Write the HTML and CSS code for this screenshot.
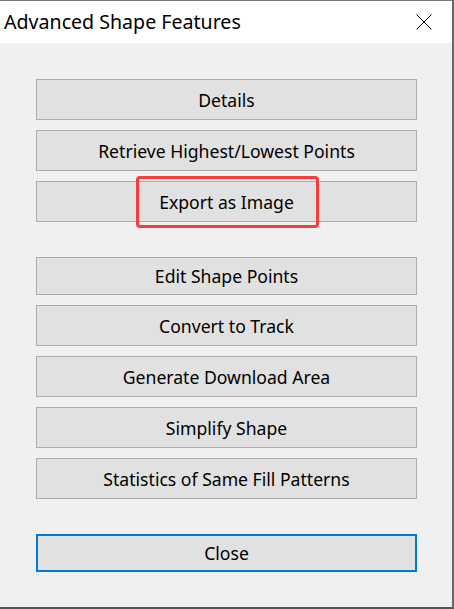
FILE: index.html
```html
<!DOCTYPE html>
<html>
<head>
<meta charset="utf-8">
<link rel="stylesheet" href="styles.css">
</head>
<body>
<div class="window">
  <div class="titlebar">
    <span class="title">Advanced Shape Features</span>
    <span class="close-x">
      <svg width="16" height="16" viewBox="0 0 16 16"><path d="M0.5 0.5 L15.5 15.5 M15.5 0.5 L0.5 15.5" stroke="#000" stroke-width="1" fill="none"/></svg>
    </span>
  </div>
  <div class="content">
    <div class="group">
      <button class="btn">Details</button>
      <button class="btn">Retrieve Highest/Lowest Points</button>
      <div class="btn-wrap">
        <button class="btn">Export as Image</button>
        <span class="highlight"></span>
      </div>
    </div>
    <div class="group group-2">
      <button class="btn btn-short">Edit Shape Points</button>
      <button class="btn">Convert to Track</button>
      <button class="btn">Generate Download Area</button>
      <button class="btn">Simplify Shape</button>
      <button class="btn">Statistics of Same Fill Patterns</button>
    </div>
    <div class="group group-3">
      <button class="btn btn-short btn-default">Close</button>
    </div>
  </div>
</div>
</body>
</html>
```

FILE: styles.css
```css
html, body {
  margin: 0;
  padding: 0;
  background: #f0f0f0;
}
.window {
  width: 452px;
  height: 606px;
  border-top: 1px solid #777;
  border-right: 2px solid #666;
  border-bottom: 2px solid #555;
  background: #f0f0f0;
  font-family: "Noto Sans", sans-serif;
  display: flex;
  flex-direction: column;
}
.titlebar {
  height: 42px;
  background: #fff;
  display: flex;
  align-items: center;
  justify-content: space-between;
  padding: 0 20px 0 4px;
}
.title {
  font-size: 19.6px;
  color: #000;
  margin-top: -1px;
}
.close-x {
  display: flex;
  margin-top: -1px;
}
.content {
  padding: 36px 0 0 36px;
  display: flex;
  flex-direction: column;
}
.group {
  display: flex;
  flex-direction: column;
  gap: 10px;
}
.group-2, .group-3 {
  margin-top: 35px;
}
.btn {
  width: 381px;
  height: 41px;
  margin: 0;
  padding: 0;
  background: #e1e1e1;
  border: 1px solid #adadad;
  font-family: "Noto Sans", sans-serif;
  font-size: 17.6px;
  color: #000;
  box-sizing: border-box;
}
.btn-short {
  height: 38px;
}
.btn-default {
  border: 2px solid #0078d7;
}
.btn-wrap {
  position: relative;
  display: flex;
}
.highlight {
  position: absolute;
  left: 100px;
  top: -5px;
  width: 183px;
  height: 52px;
  border: 3px solid #fa3c3c;
  border-radius: 4px;
  box-sizing: border-box;
}
```
